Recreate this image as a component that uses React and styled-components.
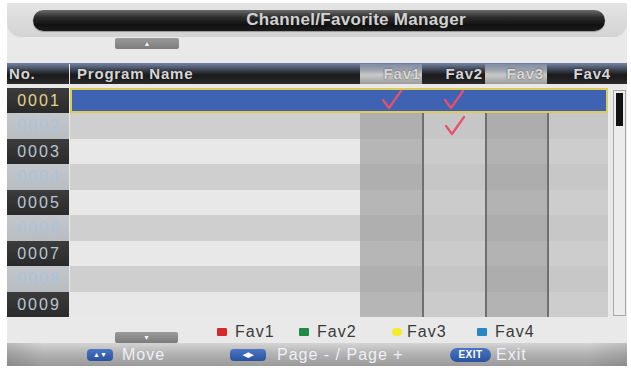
import React from "react";
import styled, { createGlobalStyle } from "styled-components";

const Global = createGlobalStyle`
   body {
      margin: 0;
      background: #ffffff;
      font-family: "Liberation Sans", Arial, sans-serif;
   }
`

const Panel = styled.div`
   width: 620px;
   height: 363px;
   margin: 3px 0 0 7px;
   background: #e9e9e9;
   display: flex;
   flex-direction: column;
`

const TitleBand = styled.div`
   height: 34px;
   padding: 7px 22px 0 26px;
   box-sizing: border-box;
   background: linear-gradient(#e4e4e4, #d3d3d3);
   border-radius: 0 0 14px 14px;
`

const TitlePill = styled.div`
   height: 21px;
   border-radius: 11px;
   background: linear-gradient(#6a6a6a 0%, #2c2c2c 35%, #111 70%, #1c1c1c 100%);
   box-shadow: 0 1px 1px rgba(0,0,0,0.3);
   color: #d2d2d2;
   font-weight: bold;
   font-size: 17px;
   letter-spacing: 0.3px;
   line-height: 20px;
   padding-left: 74px;
   text-align: center;
`

const ArrowButton = styled.div`
   width: 64px;
   height: 11px;
   margin-left: 108px;
   border-radius: 2px;
   background: linear-gradient(#9a9a9a, #7c7c7c);
   display: flex;
   align-items: center;
   justify-content: center;
   color: #f2f2f2;
   font-size: 7px;
   line-height: 1;
`

const Header = styled.div`
   display: flex;
   height: 20px;
   margin-top: 14px;
   border-top: 1px solid #6d80a8;
`

const HeadCell = styled.div`
   width: ${p => p.w}px;
   flex: ${p => (p.grow ? 1 : "none")};
   background: ${p => p.light
      ? "linear-gradient(#7f8ca4 0%, #9da3ad 30%, #c9c9c9 55%, #9b9b9b 100%)"
      : "linear-gradient(#6e7c98 0%, #3c4250 30%, #1a1a1a 55%, #2a2a2a 100%)"};
   color: #d6d6d6;
   font-weight: bold;
   font-size: 15px;
   letter-spacing: 0.8px;
   line-height: 19px;
   text-shadow: 0 0 2px rgba(0,0,0,0.6);
   text-align: ${p => p.align || "left"};
   padding: ${p => p.pad || "0"};
   box-sizing: border-box;
   white-space: nowrap;
`

const Body = styled.div`
   display: flex;
   margin-top: 4px;
   height: 230px;
`

const Table = styled.div`
   width: 601px;
   display: flex;
   flex-direction: column;
`

const Row = styled.div`
   display: flex;
   height: 25.5px;
`

const NumCell = styled.div`
   width: 62px;
   margin-right: 1px;
   background: ${p => p.dark ? "linear-gradient(#3c3c3c, #2a2a2a)" : "linear-gradient(#c3c6ca, #b9bdc2)"};
   color: ${p => p.color};
   font-size: 16px;
   letter-spacing: 2px;
   line-height: 25px;
   padding-left: 2px;
   box-sizing: border-box;
   text-align: center;
`

const RowBody = styled.div`
   flex: 1;
   display: flex;
   box-sizing: border-box;
   background: ${p => p.selected ? "#3d63b2" : p.even ? "#cfcfcf" : "#e8e8e8"};
   border: ${p => p.selected ? "2px solid #dccb55" : "none"};
`

const NameCell = styled.div`
   flex: 1;
`

const FavCell = styled.div`
   width: ${p => p.w}px;
   box-sizing: border-box;
   display: flex;
   align-items: center;
   justify-content: center;
   background: ${p => p.selected ? "transparent" : p.shade};
   border-left: ${p => p.selected || p.first ? "none" : "2px solid #6f6f6f"};
`

const ScrollTrack = styled.div`
   width: 13px;
   height: 226px;
   margin: 2px 0 0 5px;
   box-sizing: border-box;
   border: 1px solid #a9a9a9;
   background: #ececec;
   padding: 2px 0 0 2px;
`

const ScrollThumb = styled.div`
   width: 7px;
   height: 33px;
   background: #121212;
`

const LegendRow = styled.div`
   display: flex;
   align-items: flex-end;
   height: 25px;
   margin-top: 1px;
`

const DownButton = styled(ArrowButton)`
   margin-left: 108px;
   width: 63px;
`

const Legend = styled.div`
   display: flex;
   align-self: center;
   margin-left: 39px;
   margin-top: 2px;
`

const LegendItem = styled.div`
   display: flex;
   align-items: center;
   width: ${p => p.w}px;
   font-size: 16px;
   color: #3a3a3a;
   letter-spacing: 1px;
`

const Swatch = styled.span`
   width: 10px;
   height: 8px;
   margin-right: ${p => p.gap || 8}px;
   background: ${p => p.c};
   border-radius: ${p => p.round ? "4px" : "1px"};
`

const Footer = styled.div`
   height: 23px;
   display: flex;
   align-items: center;
   background:
      linear-gradient(to right, rgba(0,0,0,0.12) 0, rgba(0,0,0,0) 36px, rgba(0,0,0,0) 580px, rgba(0,0,0,0.1) 620px),
      linear-gradient(#d4d4d4 0%, #b4b4b4 45%, #9a9a9a 100%);
   color: #eef0f6;
   font-size: 16px;
   padding-left: 80px;
`

const KeyBadge = styled.span`
   display: inline-flex;
   align-items: center;
   justify-content: center;
   width: ${p => p.w}px;
   height: ${p => p.text ? 14 : 12}px;
   border-radius: ${p => p.text ? "7px" : "4px"};
   background: linear-gradient(#4a76c4, #2a529e);
   color: #fff;
   font-size: ${p => p.text ? "10px" : "7px"};
   font-weight: bold;
   margin-right: ${p => p.gap}px;
   letter-spacing: ${p => p.text ? "0.5px" : "0"};
`

const FooterItem = styled.div`
   display: flex;
   align-items: center;
   width: ${p => p.w}px;
   letter-spacing: 1px;
`

const Check = () => (
   <svg width="22" height="22" viewBox="0 0 22 22">
      <path d="M2 11 L8 19 L20 2" fill="none" stroke="#e8506a" strokeWidth="2.2" strokeLinecap="round" strokeLinejoin="round" />
   </svg>
)

const favWidths = [62, 63, 62, 61]
const favShades = (even) => even
   ? ["#afafaf", "#c6c6c6", "#adadad", "#c7c7c7"]
   : ["#b6b6b6", "#cbcbcb", "#b3b3b3", "#cdcdcd"]

const rows = [
   { no: "0001", checks: [true, true, false, false] },
   { no: "0002", checks: [false, true, false, false] },
   { no: "0003" }, { no: "0004" }, { no: "0005" }, { no: "0006" },
   { no: "0007" }, { no: "0008" }, { no: "0009" },
]

const App = () => {
   return (
      <>
         <Global />
         <Panel>
            <TitleBand>
               <TitlePill>Channel/Favorite Manager</TitlePill>
            </TitleBand>
            <ArrowButton style={{ marginTop: 1 }}>▲</ArrowButton>

            <Header>
               <HeadCell w={62} pad="0 0 0 2px">No.</HeadCell>
               <HeadCell w={1} style={{ background: "#e9e9e9" }} />
               <HeadCell grow pad="0 0 0 7px">Program Name</HeadCell>
               <HeadCell w={62} light align="right" pad="0 1px 0 0">Fav1</HeadCell>
               <HeadCell w={63} align="right" pad="0 2px 0 0">Fav2</HeadCell>
               <HeadCell w={62} light align="right" pad="0 3px 0 0">Fav3</HeadCell>
               <HeadCell w={80} align="right" pad="0 16px 0 0">Fav4</HeadCell>
            </Header>

            <Body>
               <Table>
                  {rows.map((r, i) => {
                     const selected = i === 0
                     const even = i % 2 === 1
                     const shades = favShades(even)
                     return (
                        <Row key={r.no}>
                           <NumCell dark={!even} color={selected ? "#e4d58c" : even ? "#a9c4dd" : "#b9c6d3"}>{r.no}</NumCell>
                           <RowBody selected={selected} even={even}>
                              <NameCell />
                              {favWidths.map((w, j) => (
                                 <FavCell key={j} w={selected && (j === 0 || j === 3) ? w - 2 : w} selected={selected} first={j === 0} shade={shades[j]}>
                                    {r.checks && r.checks[j] && <Check />}
                                 </FavCell>
                              ))}
                           </RowBody>
                        </Row>
                     )
                  })}
               </Table>
               <ScrollTrack>
                  <ScrollThumb />
               </ScrollTrack>
            </Body>

            <LegendRow>
               <DownButton>▼</DownButton>
               <Legend>
                  <LegendItem w={82}><Swatch c="#d42a2a" />Fav1</LegendItem>
                  <LegendItem w={93}><Swatch c="#1e8a45" />Fav2</LegendItem>
                  <LegendItem w={85}><Swatch c="#f2ec2a" round gap={5} />Fav3</LegendItem>
                  <LegendItem w={70}><Swatch c="#2a86c4" />Fav4</LegendItem>
               </Legend>
            </LegendRow>

            <Footer>
               <FooterItem w={143}><KeyBadge w={26} gap={9}>▲▼</KeyBadge>Move</FooterItem>
               <FooterItem w={220}><KeyBadge w={36} gap={11}>◀▶</KeyBadge>Page - / Page +</FooterItem>
               <FooterItem w={120}><KeyBadge w={41} gap={5} text>EXIT</KeyBadge>Exit</FooterItem>
            </Footer>
         </Panel>
      </>
   )
}

export default App;
